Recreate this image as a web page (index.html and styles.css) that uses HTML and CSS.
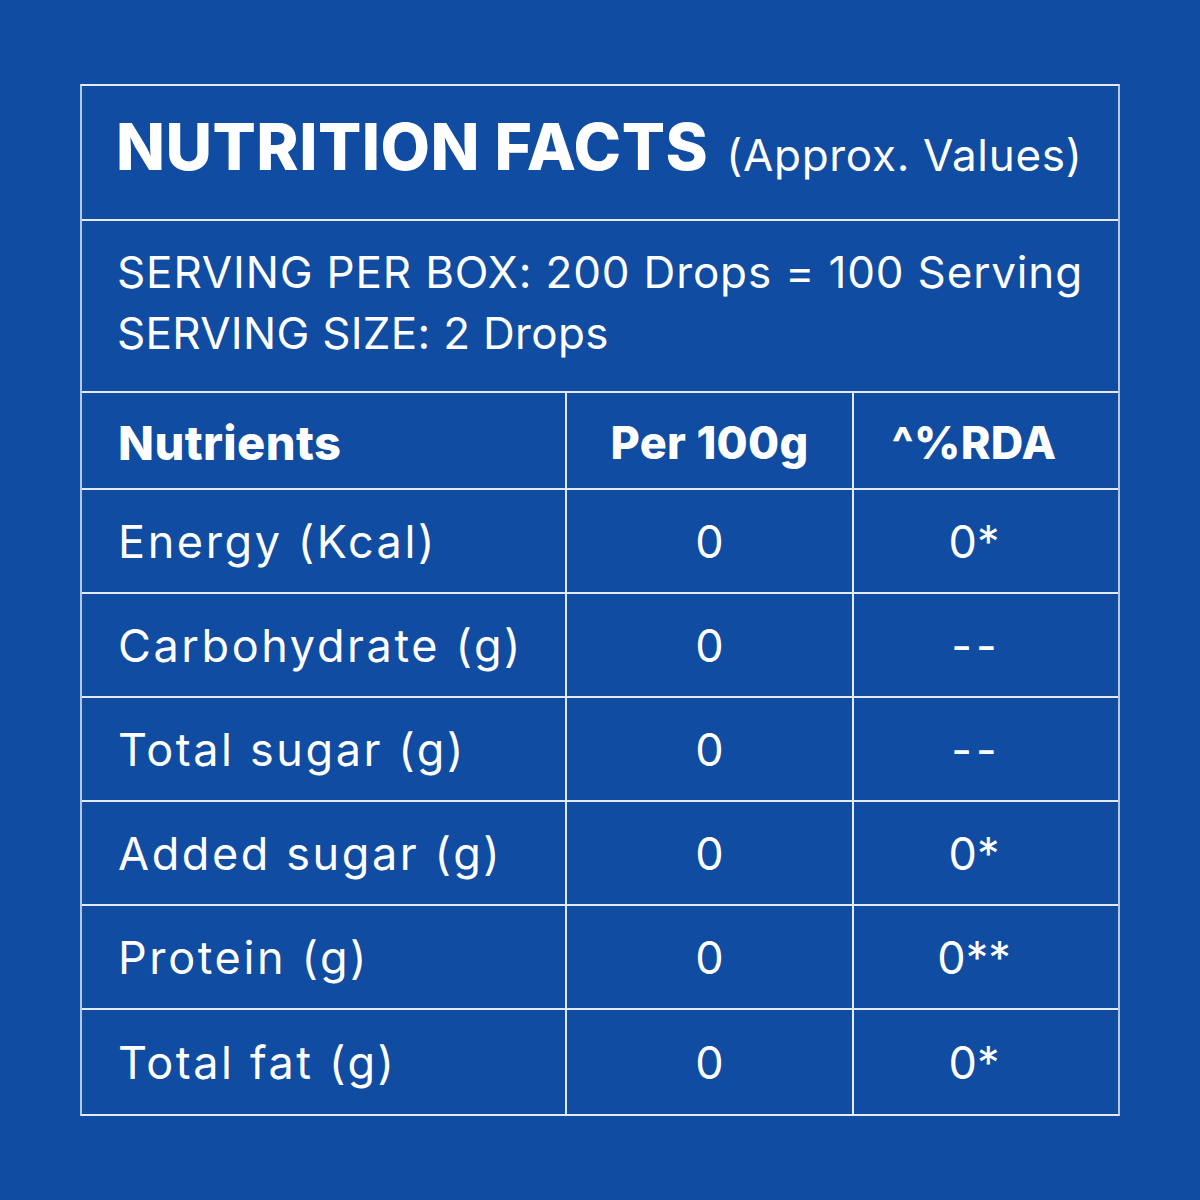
FILE: index.html
```html
<!DOCTYPE html>
<html lang="en">
<head>
<meta charset="utf-8">
<title>Nutrition Facts</title>
<link rel="stylesheet" href="styles.css">
</head>
<body>
<main class="page">
  <section class="card">
    <header class="title-row">
      <h1 class="title">NUTRITION FACTS</h1>
      <span class="title-note">(Approx. Values)</span>
    </header>
    <div class="serving-row">
      <p class="serving-line serving-first">SERVING PER BOX: 200 Drops = 100 Serving</p>
      <p class="serving-line">SERVING SIZE: 2 Drops</p>
    </div>
    <div class="facts">
      <div class="cell head name">Nutrients</div>
      <div class="cell head val">Per 100g</div>
      <div class="cell head rda">^%RDA</div>

      <div class="cell name">Energy (Kcal)</div>
      <div class="cell val">0</div>
      <div class="cell rda">0*</div>

      <div class="cell name">Carbohydrate (g)</div>
      <div class="cell val">0</div>
      <div class="cell rda dash">--</div>

      <div class="cell name">Total sugar (g)</div>
      <div class="cell val">0</div>
      <div class="cell rda dash">--</div>

      <div class="cell name">Added sugar (g)</div>
      <div class="cell val">0</div>
      <div class="cell rda">0*</div>

      <div class="cell name">Protein (g)</div>
      <div class="cell val">0</div>
      <div class="cell rda">0**</div>

      <div class="cell name">Total fat (g)</div>
      <div class="cell val">0</div>
      <div class="cell rda">0*</div>
    </div>
  </section>
</main>
</body>
</html>
```

FILE: styles.css
```css
* {
  box-sizing: border-box;
}

html, body {
  margin: 0;
  padding: 0;
}

body {
  background: #104ca2;
  color: #ffffff;
  font-family: "Inter", "Open Sans", "DejaVu Sans", sans-serif;
  width: 1200px;
  height: 1200px;
  overflow: hidden;
}

.page {
  padding: 84px 80px 0 80px;
}

.card {
  width: 1040px;
  border-top: 2px solid #e4eaf6;
  border-bottom: 2px solid #e4eaf6;
  border-left: 2px solid #b6c8ea;
  border-right: 2px solid #b6c8ea;
}

.title-row {
  height: 133px;
  display: flex;
  align-items: center;
  padding-left: 34px;
  padding-bottom: 12px;
  gap: 18px;
}

.title {
  margin: 0;
  font-size: 64px;
  font-weight: 800;
  letter-spacing: 0.5px;
  line-height: 1;
}

.title-note {
  font-size: 44px;
  font-weight: 400;
  letter-spacing: 0.7px;
  line-height: 1;
  padding-top: 16px;
}

.serving-row {
  height: 172px;
  border-top: 2px solid #e4eaf6;
  display: flex;
  flex-direction: column;
  justify-content: center;
  padding-left: 35px;
  padding-bottom: 6px;
}

.serving-line {
  margin: 0;
  font-size: 44px;
  line-height: 61px;
  font-weight: 400;
  letter-spacing: 0.3px;
}

.serving-first {
  letter-spacing: 0.85px;
}

.facts {
  display: grid;
  grid-template-columns: 483px 287px 266px;
  grid-template-rows: 97px repeat(5, 104px) 106px;
}

.cell {
  border-top: 2px solid #e4eaf6;
  display: flex;
  align-items: center;
  font-size: 45px;
  font-weight: 400;
  line-height: 1;
}

.name {
  padding-left: 36px;
  letter-spacing: 2.6px;
}

.val,
.rda {
  border-left: 2px solid #e4eaf6;
  justify-content: center;
}

.rda {
  padding-right: 24px;
}

.dash {
  letter-spacing: 4px;
  padding-left: 4px;
}

.head {
  font-weight: 800;
  font-size: 45px;
  padding-top: 4px;
}

.head.name {
  font-size: 47px;
  letter-spacing: 0.4px;
}

.head.val,
.head.rda {
  letter-spacing: 0.3px;
}
```
